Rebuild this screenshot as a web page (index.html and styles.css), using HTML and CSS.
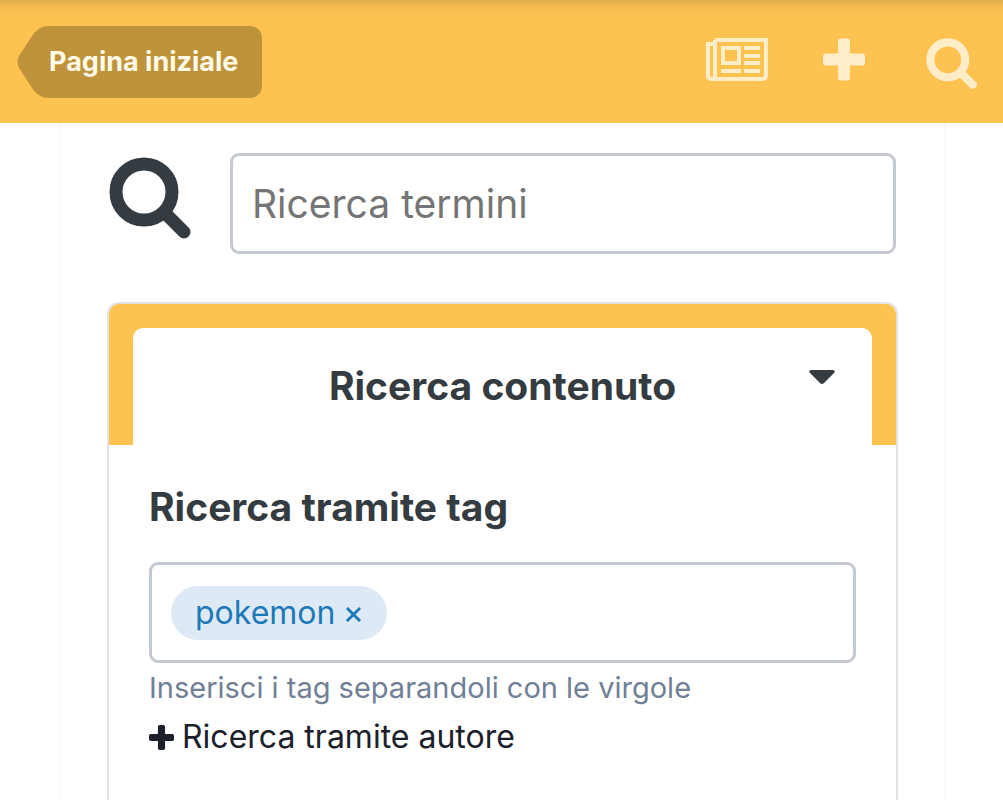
FILE: index.html
```
<!DOCTYPE html>
<html lang="it">
<head>
    <meta charset="UTF-8">
    <meta name="viewport" content="width=device-width, initial-scale=1.0">
    <title>Ricerca</title>
    <link rel="stylesheet" href="styles.css">
</head>
<body>
    <header class="top-bar">
        <a class="back-link" href="#">
            <svg class="back-arrow" viewBox="0 0 32 72" aria-hidden="true">
                <path d="M32 0C24 0 19 4 15 10L2 30Q-1 36 2 42L15 62C19 68 24 72 32 72Z"/>
            </svg>
            <span class="back-text">Pagina iniziale</span>
        </a>
        <nav class="top-icons">
            <a href="#" aria-label="Novità">
                <svg class="icon-news" viewBox="0 0 62 43" aria-hidden="true">
                    <path d="M9 2H60V37Q60 41 56 41H6Q2 41 2 37V6H9M9 2V37Q9 41 6 41" fill="none" stroke="currentColor" stroke-width="4"/>
                    <rect x="17" y="10" width="16" height="15" fill="none" stroke="currentColor" stroke-width="4"/>
                    <path d="M38 10H54M38 18H54M38 25H54M38 33H54M15 33H35" fill="none" stroke="currentColor" stroke-width="4"/>
                </svg>
            </a>
            <a href="#" aria-label="Crea">
                <svg class="icon-plus" viewBox="0 0 42 42" aria-hidden="true">
                    <path d="M18 0H24Q27 0 27 3V15H39Q42 15 42 18V24Q42 27 39 27H27V39Q27 42 24 42H18Q15 42 15 39V27H3Q0 27 0 24V18Q0 15 3 15H15V3Q15 0 18 0Z"/>
                </svg>
            </a>
            <a href="#" aria-label="Cerca">
                <svg class="icon-search" viewBox="0 0 82 82" aria-hidden="true">
                    <circle cx="35" cy="35" r="28"/>
                    <path d="M57 57L75 75"/>
                </svg>
            </a>
        </nav>
    </header>

    <main class="content">
        <form class="search-form">
            <div class="search-row">
                <label for="terms" aria-label="Ricerca termini">
                    <svg class="search-big" viewBox="0 0 82 82" aria-hidden="true">
                        <circle cx="35" cy="35" r="28"/>
                        <path d="M57 57L75 75"/>
                    </svg>
                </label>
                <input class="field terms" id="terms" type="text" placeholder="Ricerca termini">
            </div>

            <section class="panel">
                <div class="tabs">
                    <button class="tab" type="button">
                        <span class="tab-title">Ricerca contenuto</span>
                        <svg class="caret" viewBox="0 0 26 14" aria-hidden="true">
                            <path d="M2 0H24Q27 1 25 3L15 13Q13 15 11 13L1 3Q-1 1 2 0Z"/>
                        </svg>
                    </button>
                </div>
                <div class="panel-body">
                    <label class="field-title" for="tags">Ricerca tramite tag</label>
                    <div class="field tag-box">
                        <span class="tag">pokemon
                            <button class="tag-remove" type="button" aria-label="Rimuovi pokemon">
                                <svg viewBox="0 0 16 16" aria-hidden="true"><path d="M1 1L15 15M15 1L1 15"/></svg>
                            </button>
                        </span>
                        <input class="tag-input" id="tags" type="text">
                    </div>
                    <p class="hint">Inserisci i tag separandoli con le virgole</p>
                    <a class="author-link" href="#">
                        <svg class="small-plus" viewBox="0 0 42 42" aria-hidden="true">
                            <path d="M18 0H24Q27 0 27 3V15H39Q42 15 42 18V24Q42 27 39 27H27V39Q27 42 24 42H18Q15 42 15 39V27H3Q0 27 0 24V18Q0 15 3 15H15V3Q15 0 18 0Z"/>
                        </svg>
                        <span>Ricerca tramite autore</span>
                    </a>
                </div>
            </section>
        </form>
    </main>
</body>
</html>
```
FILE: styles.css
```
* {
    box-sizing: border-box;
}
body {
    margin: 0;
    min-height: 100vh;
    display: flex;
    flex-direction: column;
    font-family: Inter, "Liberation Sans", sans-serif;
    background-color: #fff;
    color: #353c41;
}
svg {
    display: block;
    fill: currentColor;
}
button, input {
    font-family: inherit;
    color: inherit;
}

/* header */
.top-bar {
    display: flex;
    align-items: center;
    justify-content: space-between;
    padding: 26px 26px 25px 17px;
    background: linear-gradient(#dcac4c, #f3b94f 6px, #fec250 16px);
}
.back-link {
    display: flex;
    color: #fffbe6;
    font-size: 27px;
    font-weight: 700;
    line-height: 72px;
    text-decoration: none;
}
.back-arrow {
    width: 32px;
    height: 72px;
    fill: #bf923c;
}
.back-text {
    padding-right: 24px;
    background-color: #bf923c;
    border-radius: 0 12px 12px 0;
}
.top-icons {
    display: flex;
    align-items: flex-start;
    padding-top: 2px;
    color: #ffedca;
}
.top-icons a {
    color: inherit;
}
.icon-news {
    width: 62px;
    height: 43px;
    margin-right: 55px;
}
.icon-plus {
    width: 42px;
    height: 43px;
    margin-right: 61px;
}
.icon-search, .search-big {
    fill: none;
    stroke: currentColor;
    stroke-width: 13px;
    stroke-linecap: round;
}
.icon-search {
    width: 51px;
    height: 51px;
}

/* main column */
.content {
    flex: 1;
    display: flex;
    margin: 0 57px 0 59px;
    border: solid #fafafa;
    border-width: 0 2px;
    padding: 30px 46px 0;
}
.search-form {
    flex: 1;
    min-width: 0;
    display: flex;
    flex-direction: column;
}
.search-row {
    display: flex;
    align-items: flex-start;
    gap: 39px;
    margin-bottom: 48px;
    padding: 0 2px;
}
.search-big {
    width: 82px;
    height: 82px;
    margin-top: 4px;
}
.field {
    height: 101px;
    border: 3px solid #c5c9d1;
    border-radius: 9px;
    background-color: #fff;
}
.terms {
    flex: 1;
    min-width: 0;
    padding: 0 19px;
    font-size: 39px;
}
.terms::placeholder {
    color: #757575;
    opacity: 1;
}

/* panel */
.panel {
    flex: 1;
    border: 2px solid #e1e3e8;
    border-bottom: 0;
    border-radius: 12px 12px 0 0;
}
.tabs {
    padding: 24px 24px 0;
    background-color: #fec250;
    border-radius: 10px 10px 0 0;
}
.tab {
    display: grid;
    grid-template-columns: 26px 1fr 26px;
    width: 100%;
    height: 117px;
    padding: 0 37px 2px;
    align-items: center;
    border: 0;
    border-radius: 10px 10px 0 0;
    background-color: #fff;
    font-size: 39px;
    font-weight: 700;
    cursor: pointer;
}
.tab-title {
    grid-column: 2;
}
.caret {
    width: 26px;
    height: 14px;
    margin-bottom: 18px;
}
.panel-body {
    padding: 35px 40px;
}
.field-title {
    display: block;
    margin-bottom: 28px;
    font-size: 39px;
    font-weight: 700;
    line-height: 54px;
}
.tag-box {
    display: flex;
    align-items: center;
    padding: 0 19px;
}
.tag {
    display: flex;
    align-items: center;
    gap: 11px;
    height: 54px;
    padding: 0 24px;
    border-radius: 27px;
    background-color: #ddeaf6;
    color: #1d78b8;
    font-size: 32px;
}
.tag-remove {
    padding: 4px 2px 0 0;
    border: 0;
    background: none;
    cursor: pointer;
}
.tag-remove svg {
    width: 15px;
    height: 15px;
    fill: none;
    stroke: currentColor;
    stroke-width: 3px;
}
.tag-input {
    flex: 1;
    min-width: 0;
    height: 54px;
    border: 0;
    outline: 0;
    background: none;
    font-size: 32px;
}
.hint {
    margin: 0;
    color: #718096;
    font-size: 29px;
    line-height: 50px;
}
.author-link {
    display: flex;
    align-items: center;
    gap: 8px;
    color: #1b202b;
    font-size: 32px;
    line-height: 48px;
    text-decoration: none;
}
.small-plus {
    width: 25px;
    height: 25px;
}
```
